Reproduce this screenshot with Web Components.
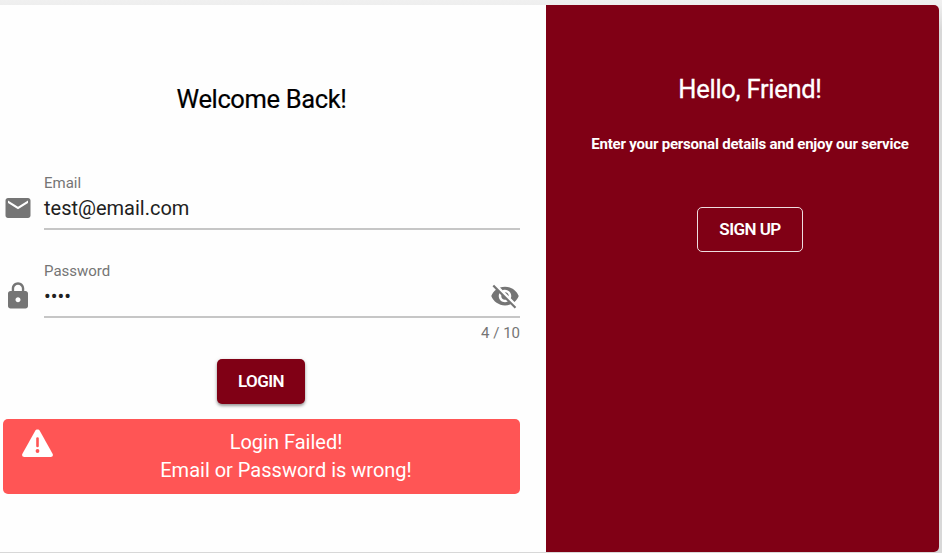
<!DOCTYPE html>
<html lang="en">
<head>
<meta charset="utf-8">
<title>Login</title>
<style>
html,body{margin:0;height:553px;overflow:hidden;background:#d8d8d8;font-family:Roboto,"Liberation Sans",sans-serif}
</style>
</head>
<body>
<login-card></login-card>
<script>
const define=(name,html)=>{
  const t=document.createElement('template');t.innerHTML=html;
  customElements.define(name,class extends HTMLElement{
    constructor(){super();this.attachShadow({mode:'open'}).append(t.content.cloneNode(true));}
  });
};

define('form-field',`
<style>
:host{display:grid;grid-template-columns:41px 476px;height:87.5px;align-content:start}
.icon{padding-top:18px;height:30px;margin-left:-.5px}
.box{height:53px;border-bottom:2px solid #c6c6c6;display:grid;grid-template-columns:1fr auto;grid-template-rows:17px 36px}
.label{font-size:15px;line-height:17px;color:#757575;grid-column:1/3}
.value{font-size:20px;line-height:32px;color:#212121}
.after{padding-top:1px}
.hint{grid-column:2;text-align:right;font-size:15px;line-height:20px;padding-top:5px;color:#757575}
</style>
<div class="icon"><slot name="icon"></slot></div>
<div class="box"><div class="label"><slot name="label"></slot></div><div class="value"><slot></slot></div><div class="after"><slot name="after"></slot></div></div>
<div class="hint"><slot name="hint"></slot></div>`);

define('action-button',`
<style>
:host{display:flex;align-items:center;justify-content:center;box-sizing:border-box;border-radius:5px;font-size:17px;font-weight:600;letter-spacing:-.55px;color:#fff}
</style><slot></slot>`);

define('error-alert',`
<style>
:host{display:grid;grid-template-columns:50px 1fr;box-sizing:border-box;height:75px;border-radius:5px;background:#ff5555;color:#fff;font-size:20px;line-height:28px;padding:9px 0 0 19px}
svg{display:block;margin-top:1px}
.msg{text-align:center;padding-right:20px}
</style>
<svg width="31" height="29" viewBox="0 0 31 29"><path fill="#fff" d="M15.5 0.5c1 0 1.900.5 2.400 1.400L30.700 25c.6 1.500-.2 3-2.100 3H2.400C.5 28-.3 26.500.3 25L13.100 1.900C13.600 1 14.500.5 15.500.5z"/><path stroke="#ff5555" stroke-width="2.600" stroke-linecap="round" d="M15.500 9.500v7.500"/><circle cx="15.500" cy="22" r="1.900" fill="#ff5555"/></svg>
<div class="msg"><slot></slot></div>`);

define('login-card',`
<style>
:host{display:block;padding-top:4.5px;background:linear-gradient(#f0f0f0,#eee 5px,#d8d8d8 30px)}
.card{display:grid;grid-template-columns:546px 393px;width:939px;height:547.5px;border-radius:0 5px 5px 0;overflow:hidden;background:#fefefe}
.left{padding:78.500px 26px 0 3px}
.right{background:#800015;color:#fff;text-align:center;padding:68.500px 0 0 15px;display:flex;flex-direction:column;align-items:center}
h1{margin:0;font-size:25.500px;font-weight:400;line-height:32px;white-space:nowrap;letter-spacing:-.36px}
.left h1{text-align:center;color:#000}
.right h1{letter-spacing:-.28px;-webkit-text-stroke:.3px}
.left h1{-webkit-text-stroke:.2px}
.fields{padding-top:60px}
h2{margin:0;font-size:15px;font-weight:700;line-height:20px;padding-top:29px;white-space:nowrap;letter-spacing:-.21px}
svg{display:block;fill:#757575}
.login{width:88px;height:45px;margin:8.500px auto 0 214px;background:#800015;box-shadow:0 2px 3px #0005,0 1px 5px #0002}
.signup{width:106px;height:45px;margin-top:52.500px;border:1px solid #fffd}
error-alert{margin-top:15px}
</style>
<div class="card">
<div class="left">
<h1 id="welcome">Welcome Back!</h1>
<div class="fields">
<form-field><svg slot="icon" width="30" height="30" viewBox="0 0 24 24"><path d="M20 4H4c-1.100 0-1.990.9-1.990 2L2 18c0 1.100.9 2 2 2h16c1.100 0 2-.9 2-2V6c0-1.100-.9-2-2-2zm0 4l-8 5-8-5V6l8 5 8-5v2z"/></svg><span slot="label">Email</span>test@email.com</form-field>
<form-field><svg slot="icon" width="30" height="30" viewBox="0 0 24 24"><path d="M18 8h-1V6c0-2.760-2.240-5-5-5S7 3.240 7 6v2H6c-1.100 0-2 .9-2 2v10c0 1.100.9 2 2 2h12c1.100 0 2-.9 2-2V10c0-1.100-.9-2-2-2zm-6 9c-1.100 0-2-.9-2-2s.9-2 2-2 2 .9 2 2-.9 2-2 2zm3.100-9H8.900V6c0-1.710 1.390-3.100 3.100-3.100s3.100 1.390 3.100 3.100v2z"/></svg><span slot="label">Password</span><span>••••</span>
<svg slot="after" width="30" height="30" viewBox="0 0 24 24"><path d="M12 7c2.760 0 5 2.240 5 5 0 .65-.13 1.260-.36 1.830l2.920 2.920c1.510-1.260 2.700-2.890 3.430-4.750-1.730-4.390-6-7.500-11-7.500-1.400 0-2.740.25-3.980.7l2.160 2.160C10.740 7.130 11.350 7 12 7zM2 4.270l2.280 2.280.46.46C3.080 8.300 1.780 10.020 1 12c1.730 4.390 6 7.500 11 7.500 1.550 0 3.030-.3 4.380-.84l.42.42L19.730 22 21 20.730 3.270 3 2 4.270zM7.530 9.800l1.550 1.550c-.05.21-.08.43-.08.65 0 1.660 1.340 3 3 3 .22 0 .44-.03.65-.08l1.550 1.550c-.67.33-1.410.53-2.200.53-2.760 0-5-2.240-5-5 0-.79.2-1.530.53-2.200zm4.310-.78l3.150 3.150.02-.16c0-1.660-1.340-3-3-3l-.17.01z"/></svg><span slot="hint">4 / 10</span></form-field>
</div>
<action-button class="login">LOGIN</action-button>
<error-alert>Login Failed!<br>Email or Password is wrong!</error-alert>
</div>
<div class="right">
<h1 id="hello">Hello, Friend!</h1>
<h2>Enter your personal details and enjoy our service</h2>
<action-button class="signup">SIGN UP</action-button>
</div>
</div>`);
</script>
</body>
</html>
